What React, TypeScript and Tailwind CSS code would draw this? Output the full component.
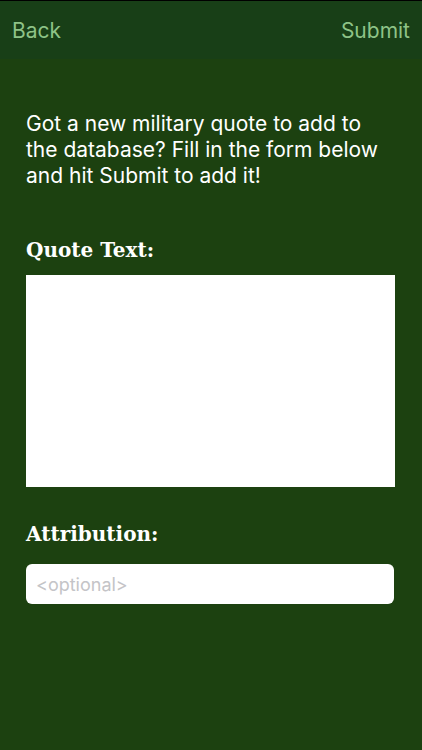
export default function App() {
  return (
    <div className="w-[422px] h-[750px] bg-[#1c4110] flex flex-col font-['Inter','Liberation_Sans',Arial,sans-serif] overflow-hidden">
      <div className="h-px bg-black" />
      <header className="h-[58px] bg-[#183f17] flex items-center justify-between px-3 pt-[2px] text-[21px] text-[#8ec387]">
        <span>Back</span>
        <span>Submit</span>
      </header>

      <main className="flex-1 px-[26px] pt-[52px]">
        <p className="text-[21px] leading-[26px] text-white">
          Got a new military quote to add to the database? Fill in the form below and hit Submit to add it!
        </p>

        <h2 className="mt-[49px] font-['DejaVu_Serif',serif] font-bold text-[20px] leading-6 text-white">
          Quote Text:
        </h2>
        <textarea className="mt-[13px] block w-[369px] h-[212px] bg-white resize-none outline-none" />

        <h2 className="mt-[35px] font-['DejaVu_Serif',serif] font-bold text-[20px] leading-6 text-white">
          Attribution:
        </h2>
        <input
          placeholder="<optional>"
          className="mt-[18px] block w-[368px] h-10 rounded-md bg-white px-[10px] text-[18px] text-black placeholder:text-[#c4c4c7] outline-none"
        />
      </main>
    </div>
  );
}
